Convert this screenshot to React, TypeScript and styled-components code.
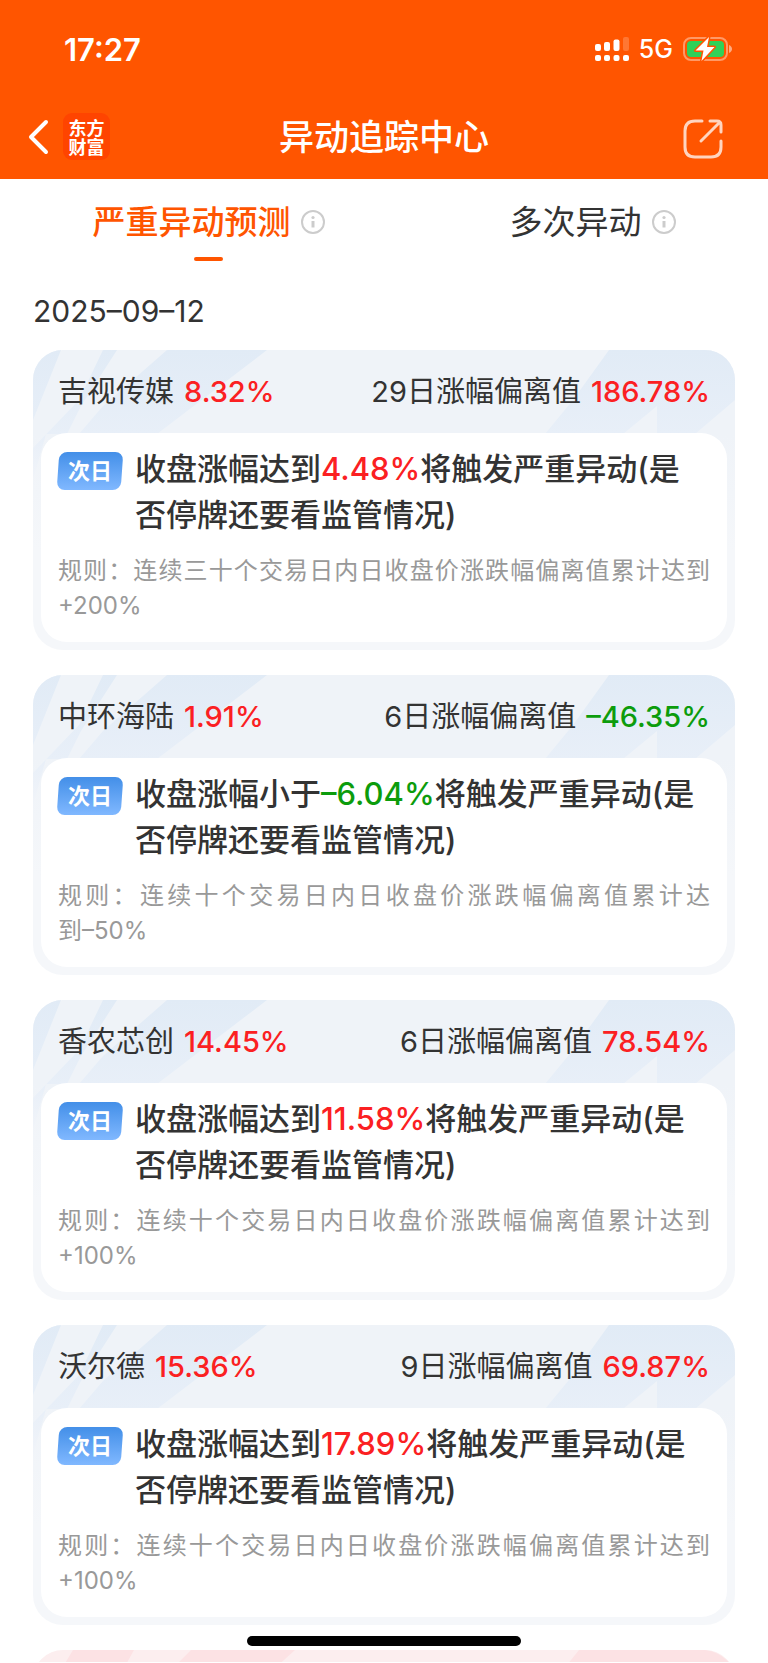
import React from 'react';
import styled, { createGlobalStyle } from 'styled-components';

const GlobalStyle = createGlobalStyle`
  *, *::before, *::after { box-sizing: border-box; }
  body {
    margin: 0;
    background: #fff;
    color: #333;
    font-family: Inter, 'Noto Sans CJK SC', sans-serif;
  }
`;

const RED = '#fb2022';
const GREEN = '#0c9c0c';

const Page = styled.div`
  position: relative;
  overflow: hidden;
`;

const Header = styled.header`
  background: #ff5500;
  color: #fff;
`;

const StatusBar = styled.div`
  display: flex;
  align-items: center;
  justify-content: space-between;
  height: 98px;
  padding: 0 36px 0 64px;
`;

const Clock = styled.time`
  font-size: 31px;
  font-weight: 600;
`;

const StatusIcons = styled.div`
  display: flex;
  align-items: center;
  gap: 10px;
  font-size: 25px;
  font-weight: 500;
`;

const NavBar = styled.nav`
  display: grid;
  grid-template-columns: 1fr auto 1fr;
  align-items: center;
  height: 81px;
  padding: 0 28px 4px;
`;

const NavStart = styled.div`
  display: flex;
  align-items: center;
  gap: 14px;
`;

const IconButton = styled.button`
  display: flex;
  padding: 0;
  border: 0;
  background: none;
  color: inherit;
  cursor: pointer;
`;

const ShareButton = styled(IconButton)`
  justify-self: end;
  margin: 4px 16px 0 0;
`;

const Logo = styled.a`
  display: flex;
  flex-direction: column;
  align-items: center;
  justify-content: center;
  width: 47px;
  height: 47px;
  border-radius: 9px;
  background: #ff4400;
  color: #fff;
  font-family: 'Noto Sans CJK SC', sans-serif;
  font-size: 18px;
  font-weight: 700;
  line-height: 19px;
  text-decoration: none;
`;

const Title = styled.h1`
  margin: 0;
  font-size: 35px;
  font-weight: 500;
  line-height: 48px;
`;

const Tabs = styled.div`
  display: grid;
  grid-template-columns: 417fr 351fr;
  height: 84px;
`;

const TabCell = styled.div`
  display: flex;
  align-items: flex-start;
  justify-content: center;
  gap: 10px;
  padding-top: 19px;
`;

const Tab = styled.button<{ $active?: boolean }>`
  position: relative;
  padding: 0;
  border: 0;
  background: none;
  color: ${(p) => (p.$active ? '#ff5500' : '#333')};
  font-family: inherit;
  font-size: 33px;
  font-weight: ${(p) => (p.$active ? 500 : 400)};
  line-height: 48px;
  cursor: pointer;
`;

const TabMark = styled.span`
  position: absolute;
  left: 50%;
  top: 59px;
  width: 29px;
  height: 4px;
  margin-left: 2px;
  border-radius: 2px;
  background: #ff5500;
`;

const InfoButton = styled(IconButton)`
  padding-top: 12px;
`;

const Main = styled.main`
  padding: 0 33px;
`;

const DateHeading = styled.h2`
  margin: 0;
  padding: 28px 0 19px;
  font-size: 30px;
  font-weight: 400;
  line-height: 40px;
`;

const CardList = styled.div`
  display: flex;
  flex-direction: column;
  gap: 25px;
`;

const Card = styled.article`
  position: relative;
  overflow: hidden;
  padding: 0 8px 8px;
  border-radius: 30px;
  background: linear-gradient(#eff3f8 0, #eff3f8 84px, #f5f7fa 200px);
`;

const Pattern = styled.svg`
  position: absolute;
  top: 0;
  left: 0;
  width: 100%;
  height: 130px;
`;

const CardHead = styled.div`
  position: relative;
  display: flex;
  align-items: center;
  justify-content: space-between;
  height: 83px;
  padding: 0 17px;
  font-size: 29px;
  line-height: 40px;
`;

const Pair = styled.span`
  display: flex;
  gap: 10px;
`;

const Value = styled.span<{ $down?: boolean }>`
  color: ${(p) => (p.$down ? GREEN : RED)};
  font-weight: 500;
`;

const Body = styled.div`
  position: relative;
  padding: 13px 17px 19px;
  border-radius: 26px;
  background: #fff;
`;

const Notice = styled.div`
  display: flex;
  gap: 13px;
`;

const Badge = styled.span`
  position: relative;
  z-index: 0;
  flex: none;
  width: 64px;
  height: 38px;
  margin-top: 6px;
  color: #fff;
  font-size: 22px;
  font-weight: 700;
  line-height: 38px;
  text-align: center;

  &::before {
    content: '';
    position: absolute;
    inset: 0;
    z-index: -1;
    border-radius: 8px;
    background: linear-gradient(#438fe8, #80b8ff);
    transform: skewX(-4deg);
  }
`;

const Message = styled.p`
  margin: 0;
  font-size: 31px;
  font-weight: 500;
  line-height: 46px;
`;

const Rule = styled.p`
  margin: 15px 0 0;
  color: #999;
  font-size: 24px;
  line-height: 35px;
  text-align: justify;
`;

const Threshold = styled.span`
  white-space: nowrap;
`;

const NextCard = styled.div`
  overflow: hidden;
  height: 12px;
  margin-top: 25px;
`;

const HomeBar = styled.div`
  position: absolute;
  left: 50%;
  bottom: 16px;
  width: 274px;
  height: 10px;
  border-radius: 5px;
  background: #000;
  transform: translateX(-50%);
`;

type Stock = {
  name: string;
  change: string;
  days: number;
  deviation: string;
  verb: string;
  trigger: string;
  rule: string;
  threshold: string;
  down?: boolean;
};

const stocks: Stock[] = [
  { name: '吉视传媒', change: '8.32%', days: 29, deviation: '186.78%', verb: '达到', trigger: '4.48%', rule: '连续三十个交易日内日收盘价涨跌幅偏离值累计达到', threshold: '+200%' },
  { name: '中环海陆', change: '1.91%', days: 6, deviation: '–46.35%', verb: '小于', trigger: '–6.04%', rule: '连续十个交易日内日收盘价涨跌幅偏离值累计达', threshold: '到–50%', down: true },
  { name: '香农芯创', change: '14.45%', days: 6, deviation: '78.54%', verb: '达到', trigger: '11.58%', rule: '连续十个交易日内日收盘价涨跌幅偏离值累计达到', threshold: '+100%' },
  { name: '沃尔德', change: '15.36%', days: 9, deviation: '69.87%', verb: '达到', trigger: '17.89%', rule: '连续十个交易日内日收盘价涨跌幅偏离值累计达到', threshold: '+100%' },
];

const CardPattern = () => (
  <Pattern viewBox="0 0 702 130" preserveAspectRatio="none" aria-hidden="true">
    <defs>
      <linearGradient id="stripe" gradientUnits="userSpaceOnUse" x1="0" y1="0" x2="0" y2="130">
        <stop offset="0" stopColor="#e1ebf6" />
        <stop offset="0.65" stopColor="#e8eff8" />
        <stop offset="1" stopColor="#f1f4f9" />
      </linearGradient>
    </defs>
    <path d="M0 0H28L0 70ZM70 0H84L48 56L34 84H13L0 130V98L46 50ZM134 0H234L124 84H46L70 56Z" fill="url(#stripe)" />
    <path d="M576 0H702V50L662 84H624V56L590 84H512L540 50Z" fill="url(#stripe)" />
  </Pattern>
);

const InfoIcon = () => (
  <svg width="24" height="24" viewBox="0 0 24 24" fill="none" aria-hidden="true">
    <circle cx="12" cy="12" r="11" stroke="#ccc" strokeWidth="2" />
    <circle cx="12" cy="7.5" r="1.6" fill="#ccc" />
    <path d="M12 11V17.5" stroke="#ccc" strokeWidth="3" />
  </svg>
);

const SignalIcon = () => (
  <svg width="34" height="25" viewBox="0 0 34 25" fill="#fff" aria-hidden="true">
    <rect x="0" y="7" width="6" height="7" rx="2" />
    <rect x="9" y="5" width="6" height="9" rx="2" />
    <rect x="18.500" y="2.500" width="6" height="11.500" rx="2" />
    <rect x="28" y="0" width="6" height="14" rx="2" opacity="0.2" />
    <rect x="0" y="18" width="6" height="6" rx="2" />
    <rect x="9" y="18" width="6" height="6" rx="2" />
    <rect x="18.500" y="18" width="6" height="6" rx="2" />
    <rect x="28" y="18" width="6" height="6" rx="2" />
  </svg>
);

const BatteryIcon = () => (
  <svg width="49" height="26" viewBox="0 0 49 26" aria-hidden="true">
    <rect x="1" y="2" width="43" height="22" rx="7" fill="none" stroke="#fff" strokeOpacity="0.4" strokeWidth="2" />
    <rect x="4" y="5" width="37" height="16" rx="4" fill="#30d158" />
    <path d="M46 9C50 10.500 50 15.500 46 17Z" fill="#fff" opacity="0.5" />
    <path d="M26 1L12.500 14.500H20.500L18.500 25L31.500 11H24Z" fill="#fff" stroke="#ff5500" strokeWidth="3" paintOrder="stroke" strokeLinejoin="round" />
  </svg>
);

export default function App() {
  return (
    <Page lang="zh-CN">
      <GlobalStyle />
      <Header>
        <StatusBar>
          <Clock>17:27</Clock>
          <StatusIcons>
            <SignalIcon />
            <span>5G</span>
            <BatteryIcon />
          </StatusIcons>
        </StatusBar>
        <NavBar>
          <NavStart>
            <IconButton aria-label="返回">
              <svg width="21" height="36" viewBox="0 0 21 36" fill="none" stroke="#fff" strokeWidth="4" strokeLinecap="round" strokeLinejoin="round">
                <path d="M18 3L3 18L18 33" />
              </svg>
            </IconButton>
            <Logo href="#">
              <span>东方</span>
              <span>财富</span>
            </Logo>
          </NavStart>
          <Title>异动追踪中心</Title>
          <ShareButton aria-label="分享">
            <svg width="42" height="42" viewBox="0 0 42 42" fill="none" stroke="#fff" strokeOpacity="0.75" strokeWidth="3" strokeLinecap="round" strokeLinejoin="round">
              <path d="M20 3H13Q3 3 3 13V29Q3 39 13 39H29Q39 39 39 29V23M28 3H35Q39 3 39 7V14M38 4L19 23" />
            </svg>
          </ShareButton>
        </NavBar>
      </Header>
      <Tabs>
        <TabCell>
          <Tab $active>严重异动预测<TabMark /></Tab>
          <InfoButton aria-label="严重异动预测说明"><InfoIcon /></InfoButton>
        </TabCell>
        <TabCell>
          <Tab>多次异动</Tab>
          <InfoButton aria-label="多次异动说明"><InfoIcon /></InfoButton>
        </TabCell>
      </Tabs>
      <Main>
        <DateHeading>2025–09–12</DateHeading>
        <CardList>
          {stocks.map((s) => (
            <Card key={s.name}>
              <CardPattern />
              <CardHead>
                <Pair><span>{s.name}</span><Value>{s.change}</Value></Pair>
                <Pair><span>{s.days}日涨幅偏离值</span><Value $down={s.down}>{s.deviation}</Value></Pair>
              </CardHead>
              <Body>
                <Notice>
                  <Badge>次日</Badge>
                  <Message>
                    收盘涨幅{s.verb}<Value $down={s.down}>{s.trigger}</Value>将触发严重异动(是否停牌还要看监管情况)
                  </Message>
                </Notice>
                <Rule>{`规则\uff1a${s.rule}`}<Threshold>{s.threshold}</Threshold></Rule>
              </Body>
            </Card>
          ))}
        </CardList>
        <NextCard>
          <svg width="100%" height="60" viewBox="0 0 702 60" preserveAspectRatio="none" aria-hidden="true">
            <rect width="702" height="90" rx="30" fill="#fceeef" />
            <path d="M40 0H101L90 20H28ZM158 0H262L240 20H138ZM546 0H672Q690 2 702 20H530Z" fill="#fce2e4" />
          </svg>
        </NextCard>
      </Main>
      <HomeBar />
    </Page>
  );
}
